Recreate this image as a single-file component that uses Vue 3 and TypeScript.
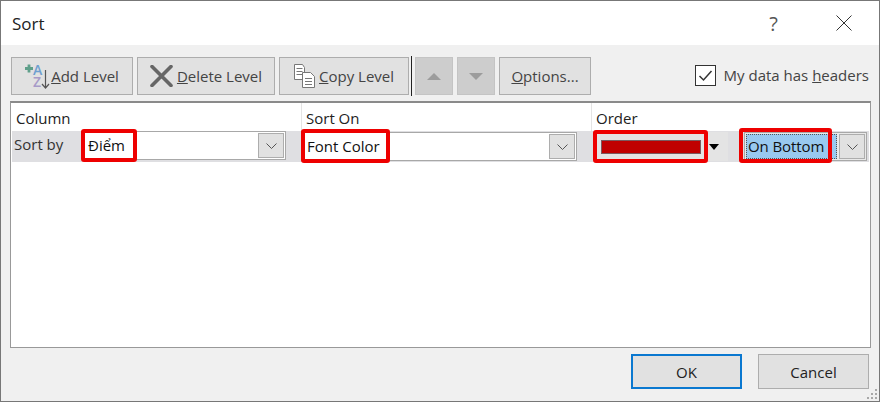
<script setup lang="ts">
const grip: [number, number][] = [[8,0],[4,4],[8,4],[0,8],[4,8],[8,8]]
</script>

<template>
  <div class="window">
    <header class="title">
      <span class="title-text">Sort</span>
      <span class="help">?</span>
      <svg class="close" width="16" height="16" viewBox="0 0 16 16"><path d="M.5.500l15 15M15.500.5l-15 15" stroke="#333" fill="none"/></svg>
    </header>
    <main class="body">
      <div class="toolbar">
        <button class="btn add">
          <svg class="ico" width="26" height="32" viewBox="0 0 26 32">
            <path d="M0 8.500h8M4 4.500v8" stroke="#5f9f8a" stroke-width="2.800" fill="none"/>
            <text x="8" y="15" class="az a">A</text>
            <text x="8" y="27" class="az z">Z</text>
            <path d="M20.500 10v18M17 24l3.500 4 3.500-4" stroke="#555" stroke-width="1.200" fill="none"/>
          </svg>
          <span><u>A</u>dd Level</span>
        </button>
        <button class="btn del">
          <svg class="ico" width="23" height="22" viewBox="0 0 23 22"><path d="M2 1.500l19 19M21 1.500L2 20.500" stroke="#666" stroke-width="3.600" fill="none" stroke-linecap="round"/></svg>
          <span><u>D</u>elete Level</span>
        </button>
        <button class="btn copy">
          <svg class="ico" width="22" height="24" viewBox="0 0 22 24" fill="#fff" stroke="#777">
            <path d="M.5.500h8l2 3v12H.5z"/><path d="M2.500 4.500h6M2.500 7.500h6M2.500 10.500h6" fill="none"/>
            <path d="M8.500 8.500h8l4 4v11h-12z"/><path d="M11 14.500h7M11 17.500h7M11 20.500h7" fill="none"/>
          </svg>
          <span><u>C</u>opy Level</span>
        </button>
        <div class="sep"></div>
        <button class="btn move"><span class="tri up"></span></button>
        <button class="btn move"><span class="tri down"></span></button>
        <button class="btn options"><span><u>O</u>ptions...</span></button>
        <label class="headers">
          <svg class="check" width="21" height="21" viewBox="0 0 21 21"><rect x=".5" y=".5" width="20" height="20" fill="#fff" stroke="#333"/><path d="M4.500 11l4 4 8-9" fill="none" stroke="#333" stroke-width="1.500"/></svg>
          <span>My data has <u>h</u>eaders</span>
        </label>
      </div>

      <section class="grid">
        <div class="grid-head">
          <div class="col c1">Column</div>
          <div class="col c2">Sort On</div>
          <div class="col c3">Order</div>
        </div>
        <div class="row">
          <div class="cell c1 first">
            <span class="sortby">Sort by</span>
            <div class="combo dz">
              <span class="val">Điểm</span>
              <span class="drop"><svg width="11" height="6" viewBox="0 0 11 6"><path d="M.5.500l5 5 5-5" fill="none" stroke="#555"/></svg></span>
              <i class="mark m1"></i>
            </div>
          </div>
          <div class="cell c2">
            <div class="combo on">
              <span class="val">Font Color</span>
              <span class="drop"><svg width="11" height="6" viewBox="0 0 11 6"><path d="M.5.500l5 5 5-5" fill="none" stroke="#555"/></svg></span>
              <i class="mark m2"></i>
            </div>
          </div>
          <div class="cell c3">
            <div class="color">
              <span class="swatch"></span>
              <span class="black-arrow"></span>
              <i class="mark m3"></i>
            </div>
            <div class="combo pos">
              <span class="sel">On Bottom</span>
              <span class="drop"><svg width="11" height="6" viewBox="0 0 11 6"><path d="M.5.500l5 5 5-5" fill="none" stroke="#555"/></svg></span>
              <i class="mark m4"></i>
            </div>
          </div>
        </div>
      </section>

      <footer class="actions">
        <button class="btn foot ok">OK</button>
        <button class="btn foot">Cancel</button>
        <svg class="grip" width="11" height="11" viewBox="0 0 11 11"><rect v-for="(p, i) in grip" :key="i" :x="p[0]" :y="p[1]" width="2" height="2" fill="#a8a8a8"/></svg>
      </footer>
    </main>
  </div>
</template>

<style>
html, body { margin: 0; background: #fff; }
</style>

<style scoped>
.window {
  width: 880px; height: 402px; box-sizing: border-box;
  border: 1px solid #777;
  display: flex; flex-direction: column; overflow: hidden;
  font-family: "Open Sans", "Noto Sans", sans-serif; font-size: 15px; color: #222;
  background: #f0f0f0;
}
.title { height: 44px; flex: none; background: #fff; display: flex; align-items: center; position: relative; }
.title-text { margin-left: 11px; font-size: 17px; color: #222; }
.help { margin-left: auto; margin-right: 58px; font-size: 20px; color: #555; }
.close { margin-right: 27px; }
.body { flex: 1; display: flex; flex-direction: column; padding: 12px 8px 0 9px; min-height: 0; }
.toolbar { display: flex; align-items: center; height: 38px; margin-left: 1px; flex: none; }
.btn {
  box-sizing: border-box; height: 38px; padding: 0; margin: 0 4px 0 0;
  background: #e1e1e1; border: 1px solid #adadad;
  font: inherit; color: #444; display: flex; align-items: center; justify-content: center;
}
.add { width: 122px; gap: 0; }
.del { width: 138px; gap: 4px; }
.copy { width: 130px; gap: 3px; margin-right: 2px; }
.ico { flex: none; }
.sep { width: 1px; height: 40px; background: #222; margin-right: 3px; }
.move { width: 38px; background: #cdcdcd; border-color: #c4c4c4; }
.options { width: 92px; margin-right: 0; }
.tri { width: 0; height: 0; border-left: 7px solid transparent; border-right: 7px solid transparent; }
.tri.up { border-bottom: 7px solid #9c9c9c; }
.tri.down { border-top: 7px solid #9c9c9c; }
.headers { margin-left: auto; margin-right: 2px; margin-top: -2px; display: flex; align-items: center; gap: 8px; color: #444; }
.check { flex: none; }
.grid {
  flex: none; height: 247px; box-sizing: border-box; margin-top: 6px;
  background: #fff; border: 1px solid #999; border-top: 2px solid #8a8a8a;
}
.grid-head { display: flex; height: 28px; }
.col { box-sizing: border-box; padding: 5px 0 0 4px; }
.col.c1 { padding-left: 5px; }
.c1 { width: 290px; flex: none; box-sizing: border-box; }
.c2 { width: 290px; flex: none; box-sizing: border-box; }
.c3 { flex: 1; box-sizing: border-box; }
.col.c2, .col.c3 { border-left: 1px solid #e4e4e4; }
.row { display: flex; height: 31px; margin: 0 1px; background: #dfdfe2; }
.cell { display: flex; align-items: center; height: 100%; min-width: 0; }
.row .c1 { width: 289px; }
.first { padding: 0 0 2px 2px; }
.sortby { width: 68px; flex: none; margin-top: -4px; color: #333; }
.combo {
  position: relative; box-sizing: border-box; height: 29px;
  background: #fff; border: 1px solid #a8a8a8;
  display: flex; align-items: center;
}
.dz { width: 204px; }
.on { width: 276px; margin-left: 0; }
.val { padding-left: 5px; margin-top: -2px; color: #111; flex: 1; }
.drop {
  flex: none; box-sizing: border-box; width: 26px; height: 25px; margin-right: 1px;
  background: #e1e1e1; border: 1px solid #adadad;
  display: flex; align-items: center; justify-content: center;
}
.c3.cell { padding-left: 4px; }
.color {
  position: relative; width: 133px; height: 29px; box-sizing: border-box;
  display: flex; align-items: center; background: #e4e4e4; flex: none;
}
.swatch { width: 100px; height: 14px; margin-left: 6px; background: #c00000; box-sizing: border-box; border: 1px solid #7a5a5f; }
.black-arrow { margin-left: 8px; width: 0; height: 0; border-left: 5.500px solid transparent; border-right: 5.500px solid transparent; border-top: 6px solid #000; }
.pos { width: 123px; margin-left: 16px; background: #e9e9e9; }
.sel {
  flex: 1; height: 25px; margin-left: 1px; margin-right: 2px; line-height: 23px;
  background: #99c9ef; color: #111; white-space: nowrap; box-sizing: border-box;
  border: 1px dotted #555; padding-left: 1px; letter-spacing: -0.1px;
}
.mark { position: absolute; box-sizing: border-box; border: 4px solid #ee0000; border-radius: 3px; pointer-events: none; }
.m1 { left: -2px; top: -3px; width: 56px; height: 33px; }
.m2 { left: -1px; top: -4px; width: 89px; height: 34px; }
.m3 { left: -2px; top: -2px; width: 115px; height: 33px; }
.m4 { left: -6px; top: -5px; width: 93px; height: 35px; }
.actions { flex: 1; display: flex; justify-content: flex-end; padding: 6px 2px 0 0; position: relative; }
.foot { width: 111px; height: 35px; margin: 0 0 0 16px; color: #222; }
.ok { border: 2px solid #0a78d0; }
.grip { position: absolute; right: -7px; bottom: 1px; }
.az { font-size: 14px; font-weight: 600; font-family: "Open Sans", sans-serif; }
.a { fill: #6f9fd0; }
.z { fill: #a79ac8; }
</style>
